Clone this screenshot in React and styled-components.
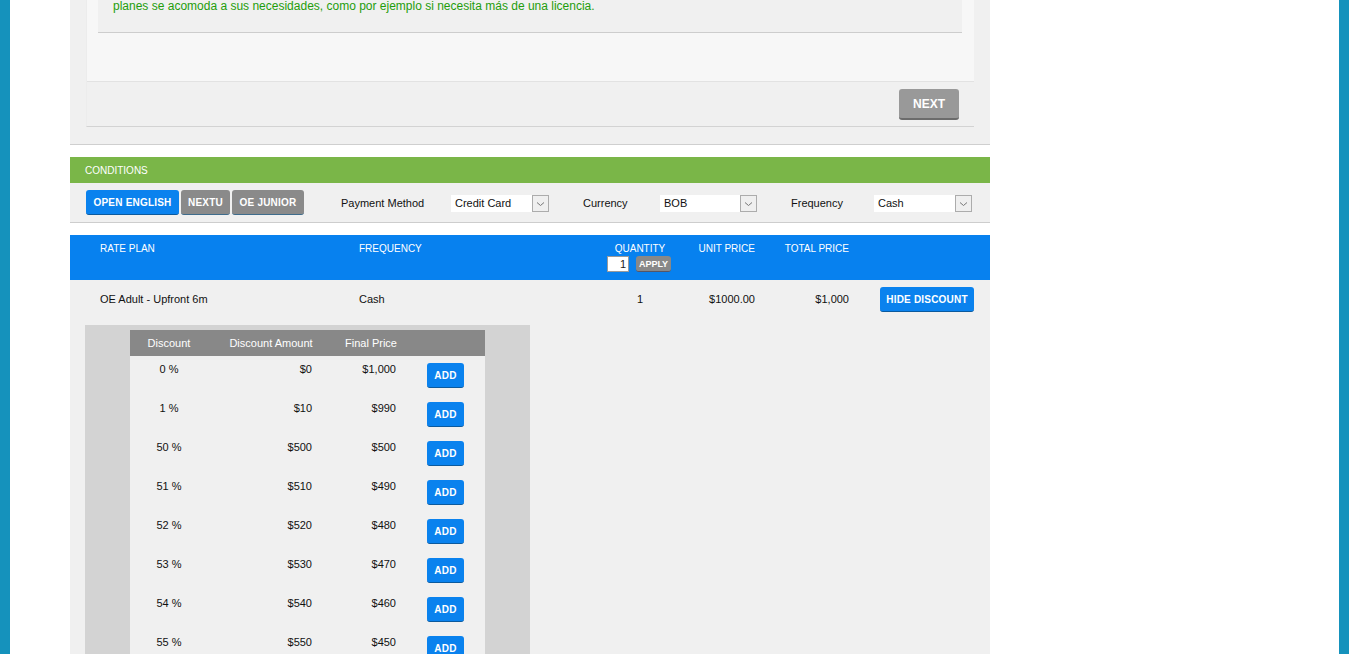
import React from "react";
import styled, { createGlobalStyle } from "styled-components";

const Global = createGlobalStyle`
  html, body { margin: 0; padding: 0; background: #fff; overflow: hidden; }
  body { font-family: "Liberation Sans", Arial, sans-serif; font-size: 11px; color: #111; }
  * { box-sizing: border-box; }
`;

const Page = styled.div`
  min-height: 100vh;
  border-left: 10px solid #1592bc;
  border-right: 10px solid #1592bc;
  background: #fff;
`;

const Main = styled.div`
  width: 920px;
  margin-left: 60px;
  display: flex;
  flex-direction: column;
`;

const TopPanel = styled.div`
  background: #f0f0f0;
  border-bottom: 1px solid #cfcfcf;
  padding: 0 16px 17px;
`;

const Card = styled.div`
  background: #f7f7f7;
  border-left: 1px solid #ececec;
  border-bottom: 1px solid #d3d3d3;
`;

const CardBody = styled.div`
  padding: 0 12px 0 11px;
  height: 82px;
  border-bottom: 1px solid #e2e2e2;
`;

const Message = styled.div`
  background: #f0f0f0;
  border-bottom: 1px solid #cdcdcd;
  height: 33px;
  padding: 0 15px;
  overflow: hidden;
`;

const MessageText = styled.p`
  margin: -1px 0 0;
  font-size: 12px;
  line-height: 14px;
  color: #1f9d0c;
`;

const CardFooter = styled.div`
  height: 44px;
  background: #f0f0f0;
  display: flex;
  justify-content: flex-end;
  align-items: flex-start;
  padding: 7px 15px 0 0;
`;

const NextButton = styled.button`
  width: 60px;
  height: 31px;
  border: none;
  border-bottom: 2px solid #6c6c6c;
  border-radius: 3px;
  background: #999;
  color: #fff;
  font-family: inherit;
  font-weight: bold;
  font-size: 12px;
  padding: 0;
`;

const Gap = styled.div`
  height: 12px;
  background: #fff;
`;

const GreenBar = styled.div`
  height: 26px;
  background: #7ab648;
  color: #fff;
  font-size: 10px;
  display: flex;
  align-items: center;
  padding-left: 15px;
`;

const Toolbar = styled.div`
  height: 40px;
  background: #f0f0f0;
  border-bottom: 1px solid #cdcdcd;
  display: flex;
  align-items: flex-start;
  padding: 7px 0 0 16px;
`;

const BrandButton = styled.button`
  height: 25px;
  width: ${(p) => p.$w}px;
  margin-right: 2px;
  border: none;
  border-bottom: 1px solid ${(p) => (p.$active ? "#0b5a9e" : "#3e6c8c")};
  border-radius: 3px;
  background: ${(p) => (p.$active ? "#0a82ee" : "#8a8a8a")};
  color: #fff;
  font-family: inherit;
  font-weight: bold;
  font-size: 10px;
  letter-spacing: 0.2px;
  padding: 0;
`;

const FieldLabel = styled.span`
  width: ${(p) => p.$w}px;
  margin-left: ${(p) => p.$ml}px;
  height: 25px;
  display: flex;
  align-items: center;
  font-size: 11px;
  color: #111;
`;

const Select = styled.div`
  width: ${(p) => p.$w}px;
  height: 17px;
  margin-top: 5px;
  display: flex;
  background: #fff;
`;

const SelectValue = styled.span`
  flex: 1;
  padding-left: 4px;
  font-size: 11px;
  line-height: 16px;
  color: #111;
`;

const SelectArrow = styled.span`
  width: 17px;
  height: 17px;
  border: 1px solid #acacac;
  background: #efefef;
  display: flex;
  align-items: center;
  justify-content: center;
`;

const TableHead = styled.div`
  height: 45px;
  background: #0781ef;
  color: #fff;
  display: grid;
  grid-template-columns: 259px 241px 80px 75px 94px 141px;
  padding-left: 30px;
  padding-top: 7px;
  font-size: 10px;
`;

const HeadCell = styled.div`
  text-align: ${(p) => p.$align || "left"};
  line-height: 13px;
`;

const QtyCell = styled.div`
  display: flex;
  flex-direction: column;
  align-items: center;
  line-height: 13px;
`;

const QtyControls = styled.div`
  display: flex;
  align-items: center;
  gap: 7px;
  margin-top: 1px;
  margin-left: -2px;
`;

const QtyInput = styled.div`
  width: 22px;
  height: 16px;
  background: #fff;
  border: 1px solid #9a9a9a;
  color: #222;
  font-size: 11px;
  line-height: 14px;
  text-align: right;
  padding-right: 2px;
`;

const ApplyButton = styled.button`
  width: 35px;
  height: 16px;
  border: none;
  border-bottom: 1px solid #556;
  border-radius: 3px;
  background: #888;
  color: #fff;
  font-family: inherit;
  font-weight: bold;
  font-size: 9px;
  padding: 0;
`;

const Content = styled.div`
  background: #f0f0f0;
  min-height: 400px;
`;

const PlanRow = styled.div`
  display: grid;
  grid-template-columns: 259px 241px 80px 75px 94px 141px;
  padding: 7px 0 13px 30px;
  align-items: center;
  font-size: 11px;
`;

const Cell = styled.div`
  text-align: ${(p) => p.$align || "left"};
  margin-top: -1px;
`;

const ButtonCell = styled.div`
  padding-left: 31px;
  display: flex;
`;

const BlueButton = styled.button`
  height: 25px;
  width: ${(p) => p.$w}px;
  border: none;
  border-bottom: 1px solid #0b5a9e;
  border-radius: 3px;
  background: #0a82ee;
  color: #fff;
  font-family: inherit;
  font-weight: bold;
  font-size: 10px;
  letter-spacing: 0.2px;
  padding: 0;
`;

const DiscountPanel = styled.div`
  width: 445px;
  margin-left: 15px;
  background: #d3d3d3;
  padding: 5px 45px 0;
`;

const DiscountGrid = styled.div`
  display: grid;
  grid-template-columns: 78px 126px 74px 77px;
`;

const DHead = styled.div`
  height: 26px;
  background: #888;
  color: #fff;
  font-size: 11px;
  display: flex;
  align-items: center;
  justify-content: center;
`;

const DCell = styled.div`
  height: 39px;
  background: #f0f0f0;
  padding-top: 7px;
  padding-right: ${(p) => p.$pr || 0}px;
  padding-left: ${(p) => p.$pl || 0}px;
  text-align: ${(p) => p.$align || "left"};
  font-size: 11px;
  line-height: 13px;
  color: #111;
`;

const Chevron = () => (
  <svg width="9" height="6" viewBox="0 0 9 6">
    <path d="M1 1.5 L4.5 4.5 L8 1.5" fill="none" stroke="#777" strokeWidth="1" />
  </svg>
);

const discounts = [
  [0, 0, 1000],
  [1, 10, 990],
  [50, 500, 500],
  [51, 510, 490],
  [52, 520, 480],
  [53, 530, 470],
  [54, 540, 460],
  [55, 550, 450],
];

const money = (n) => "$" + n.toLocaleString("en-US");

export default function App() {
  return (
    <>
      <Global />
      <Page>
        <Main>
          <TopPanel>
            <Card>
              <CardBody>
                <Message>
                  <MessageText>
                    planes se acomoda a sus necesidades, como por ejemplo si necesita más de una licencia.
                  </MessageText>
                </Message>
              </CardBody>
              <CardFooter>
                <NextButton>NEXT</NextButton>
              </CardFooter>
            </Card>
          </TopPanel>
          <Gap />
          <GreenBar>CONDITIONS</GreenBar>
          <Toolbar>
            <BrandButton $active $w={93}>OPEN ENGLISH</BrandButton>
            <BrandButton $w={49}>NEXTU</BrandButton>
            <BrandButton $w={72}>OE JUNIOR</BrandButton>
            <FieldLabel $ml={35} $w={110}>Payment Method</FieldLabel>
            <Select $w={98}>
              <SelectValue>Credit Card</SelectValue>
              <SelectArrow><Chevron /></SelectArrow>
            </Select>
            <FieldLabel $ml={34} $w={77}>Currency</FieldLabel>
            <Select $w={97}>
              <SelectValue>BOB</SelectValue>
              <SelectArrow><Chevron /></SelectArrow>
            </Select>
            <FieldLabel $ml={34} $w={83}>Frequency</FieldLabel>
            <Select $w={98}>
              <SelectValue>Cash</SelectValue>
              <SelectArrow><Chevron /></SelectArrow>
            </Select>
          </Toolbar>
          <Gap />
          <TableHead>
            <HeadCell>RATE PLAN</HeadCell>
            <HeadCell>FREQUENCY</HeadCell>
            <QtyCell>
              QUANTITY
              <QtyControls>
                <QtyInput>1</QtyInput>
                <ApplyButton>APPLY</ApplyButton>
              </QtyControls>
            </QtyCell>
            <HeadCell $align="right">UNIT PRICE</HeadCell>
            <HeadCell $align="right">TOTAL PRICE</HeadCell>
            <HeadCell />
          </TableHead>
          <Content>
            <PlanRow>
              <Cell>OE Adult - Upfront 6m</Cell>
              <Cell>Cash</Cell>
              <Cell $align="center">1</Cell>
              <Cell $align="right">$1000.00</Cell>
              <Cell $align="right">$1,000</Cell>
              <ButtonCell>
                <BlueButton $w={94}>HIDE DISCOUNT</BlueButton>
              </ButtonCell>
            </PlanRow>
            <DiscountPanel>
              <DiscountGrid>
                <DHead>Discount</DHead>
                <DHead>Discount Amount</DHead>
                <DHead>Final Price</DHead>
                <DHead />
                {discounts.map(([pct, amt, fin]) => (
                  <React.Fragment key={pct}>
                    <DCell $align="center">{pct} %</DCell>
                    <DCell $align="right" $pr={22}>{money(amt)}</DCell>
                    <DCell $align="right" $pr={12}>{money(fin)}</DCell>
                    <DCell $pl={19}>
                      <BlueButton $w={37}>ADD</BlueButton>
                    </DCell>
                  </React.Fragment>
                ))}
              </DiscountGrid>
            </DiscountPanel>
          </Content>
        </Main>
      </Page>
    </>
  );
}
